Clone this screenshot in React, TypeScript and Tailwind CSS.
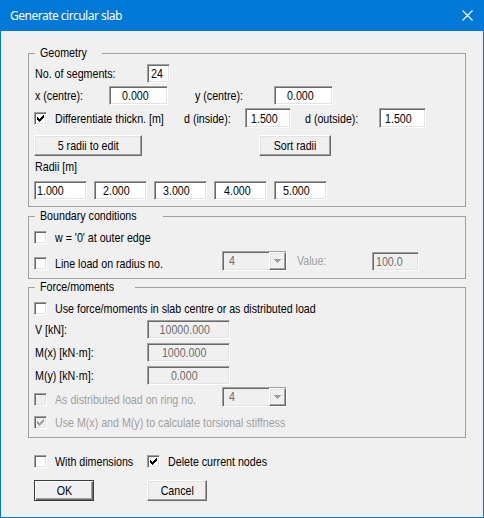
const sunken =
  'border border-t-[#a0a0a0] border-l-[#a0a0a0] border-b-white border-r-white shadow-[inset_1px_1px_0_#696969,inset_-1px_-1px_0_#e3e3e3]'
const raised =
  'border border-t-white border-l-white border-b-[#696969] border-r-[#696969] shadow-[inset_-1px_-1px_0_#a0a0a0,inset_1px_1px_0_#e3e3e3]'

const tick = [
  [6, 0], [5, 1], [6, 1], [0, 2], [4, 2], [5, 2], [6, 2], [0, 3], [1, 3], [3, 3], [4, 3], [5, 3],
  [0, 4], [1, 4], [2, 4], [3, 4], [4, 4], [1, 5], [2, 5], [3, 5], [2, 6],
]

// the dialog font is a narrow sans; squeeze Liberation Sans to the same widths
function T({ children, center }: { children: React.ReactNode; center?: boolean }) {
  return (
    <span className={`inline-block whitespace-nowrap scale-x-[0.82] ${center ? 'origin-center' : 'origin-left'}`}>
      {children}
    </span>
  )
}

function Check({ checked, disabled }: { checked?: boolean; disabled?: boolean }) {
  return (
    <span className={`flex h-[13px] w-[13px] shrink-0 ${sunken} ${disabled ? 'bg-[#f0f0f0]' : 'bg-white'}`}>
      {checked && (
        <svg width="11" height="11" viewBox="0 0 11 11" shapeRendering="crispEdges">
          {tick.map(([x, y]) => (
            <rect key={`${x}-${y}`} x={x + 2} y={y + 2} width="1" height="1" fill={disabled ? '#a0a0a0' : '#000'} />
          ))}
        </svg>
      )}
    </span>
  )
}

function CheckLabel({ text, checked, disabled, className = '' }: { text: string; checked?: boolean; disabled?: boolean; className?: string }) {
  return (
    <div className={`flex h-[19px] items-center gap-[8px] ${className}`}>
      <Check checked={checked} disabled={disabled} />
      <span className={`leading-[19px] ${disabled ? 'text-[#a0a0a0]' : 'text-black'}`}>
        <T>{text}</T>
      </span>
    </div>
  )
}

function Label({ text, className = '', muted }: { text: string; className?: string; muted?: boolean }) {
  return (
    <span className={`shrink-0 leading-[19px] ${muted ? 'text-[#a0a0a0]' : ''} ${className}`}>
      <T>{text}</T>
    </span>
  )
}

function Edit({ value, className = '', disabled, center }: { value: string; className?: string; disabled?: boolean; center?: boolean }) {
  return (
    <div
      className={`flex h-[19px] shrink-0 items-center leading-[17px] ${sunken} ${
        disabled ? 'bg-[#f0f0f0] text-[#6d6d6d]' : 'bg-white text-black'
      } ${center ? 'justify-center' : ''} ${className}`}
    >
      <T center={center}>{value}</T>
    </div>
  )
}

function Btn({ label, className = '', def }: { label: string; className?: string; def?: boolean }) {
  return (
    <div
      className={`flex shrink-0 items-center justify-center bg-[#f0f0f0] ${
        def
          ? 'border border-[#3c3c3c] shadow-[inset_1px_1px_0_#fff,inset_-1px_-1px_0_#696969,inset_-2px_-2px_0_#a0a0a0]'
          : raised
      } ${className}`}
    >
      <T center>{label}</T>
    </div>
  )
}

function Combo() {
  return (
    <div className={`flex h-[20px] w-[65px] shrink-0 bg-[#f0f0f0] ${sunken}`}>
      <span className="flex-1 pl-[6px] leading-[18px] text-[#6d6d6d]">
        <T>4</T>
      </span>
      <span className={`flex w-[17px] items-center justify-center bg-[#f0f0f0] ${raised}`}>
        <svg width="7" height="4" viewBox="0 0 7 4" shapeRendering="crispEdges">
          <path d="M0 0h7v1h-1v1h-1v1h-1v1h-1v-1h-1v-1h-1v-1h-1z" fill="#a0a0a0" />
        </svg>
      </span>
    </div>
  )
}

function Group({ title, children, className = '' }: { title: string; children: React.ReactNode; className?: string }) {
  return (
    <fieldset className={`border border-[#a0a0a0] pl-[5px] ${className}`}>
      <legend className="ml-px px-[5px] leading-[14px]">
        <T>{title}</T>
      </legend>
      {children}
    </fieldset>
  )
}

export default function App() {
  return (
    <div className="flex h-[518px] w-[484px] flex-col bg-[#0078d7] p-px font-['Liberation_Sans',Arial,sans-serif] text-[13px] text-black">
      <div className="flex h-[30px] shrink-0 items-center justify-between pl-[9px] pr-[10px]">
        <span className="font-['Noto_Sans','Open_Sans',sans-serif] text-[12px] tracking-[-0.5px] text-white">
          Generate circular slab
        </span>
        <svg width="11" height="11" viewBox="0 0 11 11" className="mb-[2px]">
          <path d="M0.5 0.5L10.5 10.5M10.5 0.5L0.5 10.5" stroke="#fff" strokeWidth="1.1" />
        </svg>
      </div>

      <div className="flex flex-1 flex-col bg-[#f0f0f0] pl-[27px] pr-[17px] pt-[15px]">
        <Group title="Geometry" className="pb-[6px]">
          <div className="mt-[4px] flex h-[19px] items-center">
            <Label text="No. of segments:" className="w-[113px] pl-px" />
            <Edit value="24" className="w-[23px] pl-[3px]" />
          </div>
          <div className="mt-[3px] flex h-[19px] items-center">
            <Label text="x (centre):" className="w-[75px] pl-px" />
            <Edit value="0.000" className="w-[59px] pl-[12px]" />
            <Label text="y (centre):" className="ml-[27px] w-[79px]" />
            <Edit value="0.000" className="w-[59px] pl-[12px]" />
          </div>
          <div className="mt-[3px] flex h-[20px] items-center">
            <CheckLabel text="Differentiate thickn. [m]" checked className="w-[150px] shrink-0" />
            <Label text="d (inside):" className="w-[61px]" />
            <Edit value="1.500" className="h-[20px] w-[46px] pl-[5px]" />
            <Label text="d (outside):" className="ml-[14px] w-[74px]" />
            <Edit value="1.500" className="h-[20px] w-[47px] pl-[5px]" />
          </div>
          <div className="mt-[7px] flex h-[21px]">
            <Btn label="5 radii to edit" className="w-[108px]" />
            <Btn label="Sort radii" className="ml-[117px] w-[72px]" />
          </div>
          <div className="mt-[4px] pl-px leading-[14px]">
            <T>Radii [m]</T>
          </div>
          <div className="mt-[7px] flex gap-[7px]">
            <Edit value="1.000" className="w-[53px] pl-[2px]" />
            <Edit value="2.000" className="w-[53px] pl-[8px]" />
            <Edit value="3.000" className="w-[53px] pl-[8px]" />
            <Edit value="4.000" className="w-[53px] pl-[9px]" />
            <Edit value="5.000" className="w-[53px] pl-[8px]" />
          </div>
        </Group>

        <Group title="Boundary conditions" className="mt-[2px] pb-[7px]">
          <CheckLabel text="w = '0' at outer edge" className="mt-[5px]" />
          <div className="mt-[4px] flex h-[20px] items-start">
            <CheckLabel text="Line load on radius no." className="mt-[3px] w-[188px] shrink-0" />
            <Combo />
            <Label text="Value:" muted className="ml-[10px] w-[75px]" />
            <Edit value="100.0" disabled className="mt-px w-[47px] pl-[3px]" />
          </div>
        </Group>

        <Group title="Force/moments" className="mt-px pb-[5px]">
          <CheckLabel text="Use force/moments in slab centre or as distributed load" className="mt-[5px]" />
          <div className="mt-[2px] flex h-[19px] items-center">
            <Label text="V [kN]:" className="w-[113px] pl-px" />
            <Edit value="10000.000" disabled center className="w-[83px] pr-[8px]" />
          </div>
          <div className="mt-[4px] flex h-[19px] items-center">
            <Label text="M(x) [kN·m]:" className="w-[113px] pl-px" />
            <Edit value="1000.000" disabled center className="w-[83px] pr-[8px]" />
          </div>
          <div className="mt-[4px] flex h-[19px] items-center">
            <Label text="M(y) [kN·m]:" className="w-[113px] pl-px" />
            <Edit value="0.000" disabled center className="w-[83px] pr-[8px]" />
          </div>
          <div className="mt-[2px] flex h-[20px] items-start">
            <CheckLabel text="As distributed load on ring no." disabled className="mt-[3px] w-[188px] shrink-0" />
            <Combo />
          </div>
          <CheckLabel text="Use M(x) and M(y) to calculate torsional stiffness" checked disabled className="mt-[6px]" />
        </Group>

        <div className="mt-[14px] flex pl-[6px]">
          <CheckLabel text="With dimensions" className="w-[113px] shrink-0" />
          <CheckLabel text="Delete current nodes" checked />
        </div>
        <div className="mt-[9px] flex pl-[6px]">
          <Btn label="OK" def className="h-[21px] w-[60px]" />
          <Btn label="Cancel" className="ml-[53px] h-[21px] w-[60px]" />
        </div>
      </div>
    </div>
  )
}
